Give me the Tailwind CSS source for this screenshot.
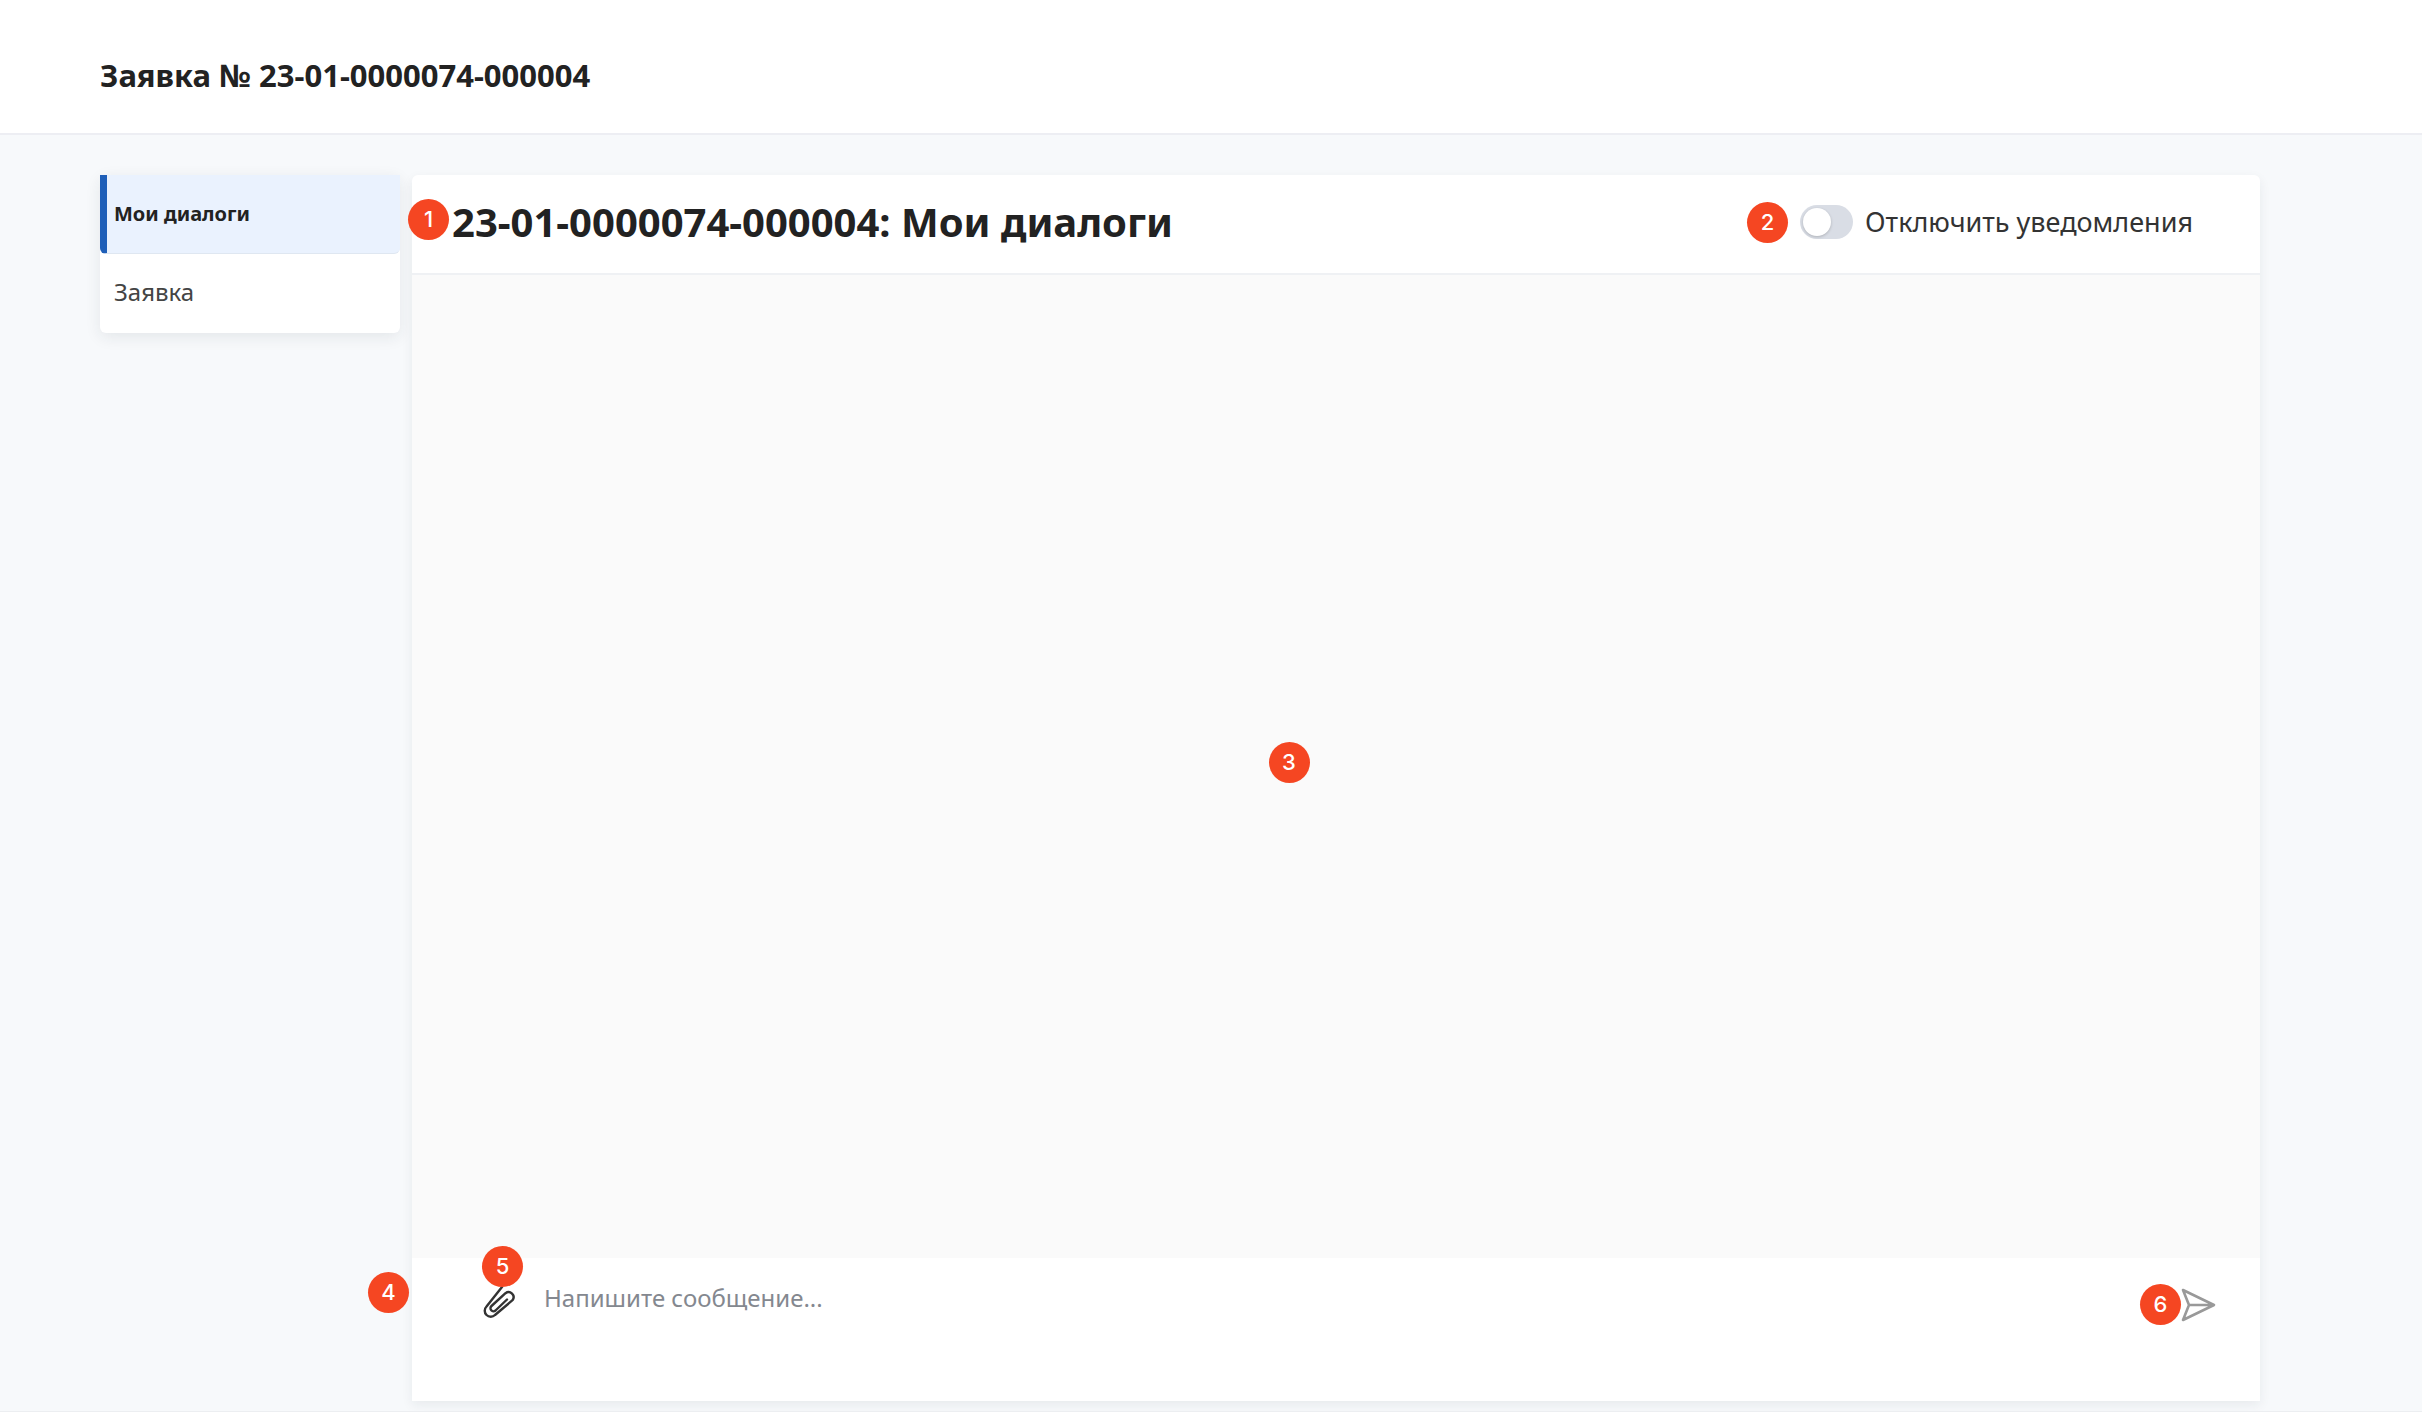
<!DOCTYPE html>
<html lang="ru">
<head>
<meta charset="utf-8">
<meta name="viewport" content="width=device-width, initial-scale=1">
<title>Заявка № 23-01-0000074-000004</title>
<script src="https://cdn.jsdelivr.net/npm/@tailwindcss/browser@4"></script>
</head>
<body class="flex min-h-screen flex-col border-b border-[#eceef1] bg-[#f7f9fb] font-['Noto_Sans',sans-serif] text-[#222]">
<header class="flex h-[135px] shrink-0 items-center border-b-2 border-[#edeef3] bg-white px-[100px] pt-4">
  <h1 class="text-[31px] leading-8 font-bold">Заявка № 23-01-0000074-000004</h1>
</header>
<div class="flex grow items-stretch gap-3 pt-10 pr-[162px] pb-[10px] pl-[100px]">
  <nav class="w-[300px] shrink-0 self-start rounded-md bg-white shadow-[0_4px_16px_rgba(30,40,60,0.09)]">
    <a href="#dialogs" aria-current="page" class="flex h-[79px] items-center rounded-b-md border-b border-l-[7px] border-b-[#dfe7f1] border-l-[#1f5fb8] bg-[#eaf2fe] pl-[7px] text-[20px] font-bold">Мои диалоги</a>
    <a href="#request" class="flex h-[79px] items-center pb-1 pl-[14px] text-[24px] text-[#444]">Заявка</a>
  </nav>
  <main class="flex min-w-0 grow flex-col rounded-t-md bg-white shadow-[0_4px_12px_rgba(30,40,60,0.07)]">
    <div class="relative flex h-[100px] shrink-0 items-center justify-between border-b-2 border-[#eff1f4] pr-[67px] pb-1 pl-10">
      <span class="absolute top-6 -left-1 flex size-[41px] items-center justify-center rounded-full bg-[#f54622] font-[Inter] text-[22px] font-medium text-white">1</span>
      <h2 class="text-[40px] leading-10 font-bold">23-01-0000074-000004: Мои диалоги</h2>
      <div class="flex items-center gap-3">
        <span class="flex size-[41px] items-center justify-center rounded-full bg-[#f54622] font-[Inter] text-[22px] font-medium text-white">2</span>
        <input id="mute" type="checkbox" role="switch" class="h-[34px] w-[53px] appearance-none rounded-full bg-[#d9dde5] p-[3px] before:block before:size-7 before:rounded-full before:bg-white before:shadow-[0_1px_3px_rgba(0,0,0,0.2)] checked:before:ml-auto">
        <label for="mute" class="text-[27px] leading-8 text-[#333]">Отключить уведомления</label>
      </div>
    </div>
    <section aria-label="Сообщения" class="flex grow items-center justify-center bg-[#fafafa] pr-[94px] pb-2">
      <span class="flex size-[41px] items-center justify-center rounded-full bg-[#f54622] font-[Inter] text-[22px] font-medium text-white">3</span>
    </section>
    <form class="relative flex h-[143px] shrink-0 items-start pt-6 pr-[43px] pl-[70px]">
      <span class="absolute top-[14px] -left-11 flex size-[41px] items-center justify-center rounded-full bg-[#f54622] font-[Inter] text-[22px] font-medium text-white">4</span>
      <button type="button" aria-label="Прикрепить файл" class="relative h-10 w-9">
        <svg viewBox="0 2 36 40" class="h-10 w-9" fill="none" stroke="#333" stroke-width="2.4" stroke-linecap="round" stroke-linejoin="round"><path d="M20 7 L4.500 26.500 A6 6 0 0 0 13 35 L30.500 20.200 A5 5 0 0 0 23.500 13.200 L9.500 26 A3 3 0 0 0 13.500 30.500 L25 19.500"/></svg>
        <span class="absolute -top-9 left-0 flex size-[41px] items-center justify-center rounded-full bg-[#f54622] font-[Inter] text-[22px] font-medium text-white">5</span>
      </button>
      <textarea aria-label="Сообщение" placeholder="Напишите сообщение..." class="ml-[26px] h-20 min-w-0 grow resize-none text-[24px] leading-8 outline-none placeholder:text-[#84888f]"></textarea>
      <div class="flex items-center pt-0.5">
        <span class="flex size-[41px] items-center justify-center rounded-full bg-[#f54622] font-[Inter] text-[22px] font-medium text-white">6</span>
        <button type="submit" aria-label="Отправить" class="h-10 w-9">
          <svg viewBox="0 0 36 40" class="h-10 w-9" fill="none" stroke="#999" stroke-width="2.6" stroke-linejoin="round"><path d="M2 5 L33 20 L2 35 L8 20 Z M8 20 H33"/></svg>
        </button>
      </div>
    </form>
  </main>
</div>
</body>
</html>
